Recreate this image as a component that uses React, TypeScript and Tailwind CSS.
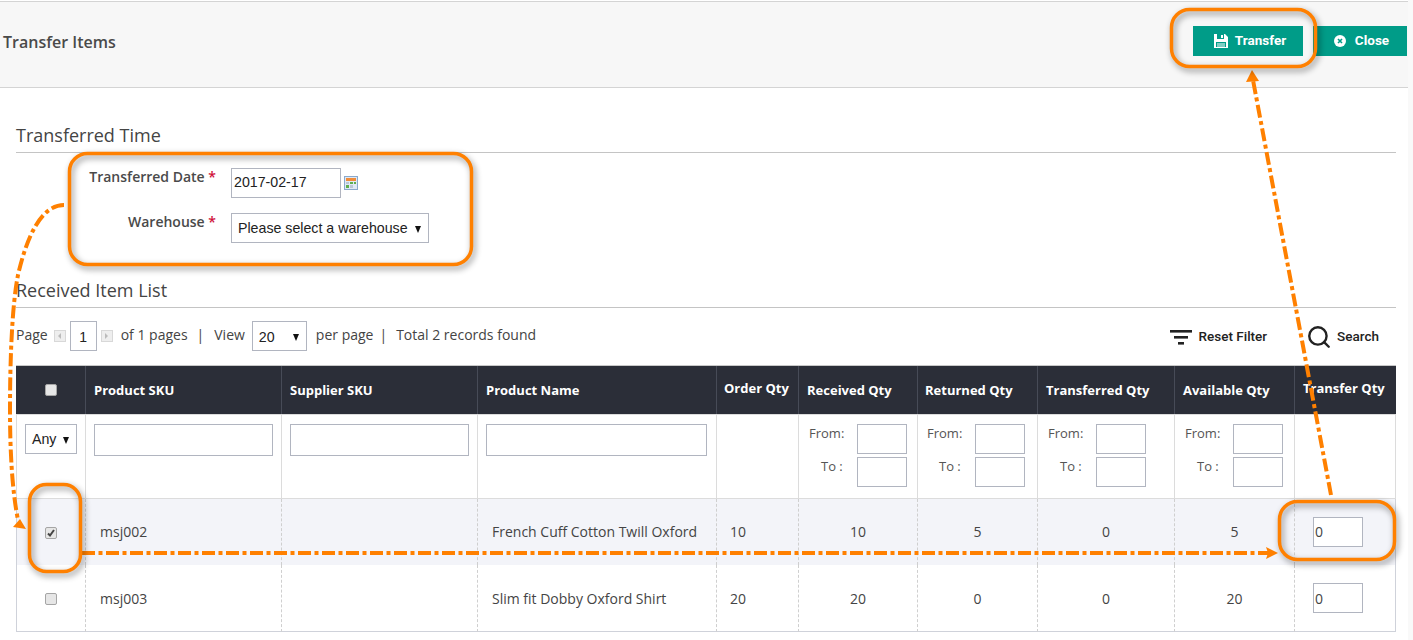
import { Search } from 'lucide-react';

const fieldClass = 'h-[30px] border border-[#b1b5c0] bg-white';

const NativeSelect = ({ value, width, paddingClass }: { value: string; width: string; paddingClass: string }) => (
  <div className={`relative flex items-center ${fieldClass} ${width} ${paddingClass} font-['Liberation_Sans',sans-serif] text-[14.2px] text-[#222]`}>
    {value}
    <span className="absolute right-[7px] top-[12px] h-0 w-0 border-x-[3.5px] border-t-[7px] border-x-transparent border-t-[#111]" />
  </div>
);

const Checkbox = ({ checked = false }: { checked?: boolean }) => (
  <span className="relative mx-auto block h-3 w-3 rounded-[2px] border border-[#a5a5a5] bg-[#e6e6e6]">
    {checked && (
      <svg viewBox="0 0 12 12" className="absolute -left-px -top-px h-3 w-3">
        <path d="M3 6.5 L5 8.5 L9 3" fill="none" stroke="#444" strokeWidth="2" />
      </svg>
    )}
  </span>
);

const PagerArrow = ({ direction }: { direction: 'left' | 'right' }) => (
  <span className="flex h-3 w-3 items-center justify-center border border-[#d8d8d8] bg-[#eee]">
    <span
      className={`h-0 w-0 border-y-[3px] border-y-transparent ${
        direction === 'left' ? 'border-r-[3px] border-r-[#bbb]' : 'border-l-[3px] border-l-[#bbb]'
      }`}
    />
  </span>
);

const RangeFilter = ({ paddingClass }: { paddingClass: string }) => (
  <td className={`border-l border-b border-t border-[#dcdcdc] align-top pt-[9px] ${paddingClass}`}>
    <div className="grid grid-cols-[48px_50px] gap-y-[3px]">
      <span className="leading-[18px] text-[13px] text-[#555]">From:</span>
      <div className={fieldClass} />
      <span className="pl-3 leading-[18px] text-[13px] text-[#555]">To :</span>
      <div className={fieldClass} />
    </div>
  </td>
);

const headers = [
  { label: 'Product SKU', padding: 'pl-2' },
  { label: 'Supplier SKU', padding: 'pl-2' },
  { label: 'Product Name', padding: 'pl-2' },
  { label: 'Order Qty', padding: 'pl-[7px]', raised: true },
  { label: 'Received Qty', padding: 'pl-2' },
  { label: 'Returned Qty', padding: 'pl-[7px]' },
  { label: 'Transferred Qty', padding: 'pl-2' },
  { label: 'Available Qty', padding: 'pl-2' },
  { label: 'Transfer Qty', padding: 'pl-2', raised: true },
];

const rows = [
  { sku: 'msj002', name: 'French Cuff Cotton Twill Oxford', order: '10', received: '10', returned: '5', transferred: '0', available: '5', checked: true },
  { sku: 'msj003', name: 'Slim fit Dobby Oxford Shirt', order: '20', received: '20', returned: '0', transferred: '0', available: '20', checked: false },
];

const dashedCell = 'border-l border-dashed border-[#cfcfcf]';
const lastRowBottom = 'border-b border-b-[#cfd2da] [border-bottom-style:solid]';

const Annotations = () => (
  <svg className="pointer-events-none absolute left-0 top-0" width="1413" height="640" fill="none">
    <g stroke="#ff8000" strokeWidth="4" strokeDasharray="13 3.5 4 3.5">
      <path d="M64 205 C40 205 26 240 18 275 C12 305 10 360 10 410 C10 450 12 490 18 520" />
      <path d="M82 553 H1268" />
      <path d="M1331 495 L1253 80" />
    </g>
    <g fill="#ff8000">
      <path d="M26 529 L13 527 L20 519 Z" />
      <path d="M1278 553 L1266 547 L1268 553 L1266 559 Z" />
      <path d="M1252 70 L1246 82 L1259 81 Z" />
    </g>
    <g stroke="#ff8000" strokeWidth="3.5" className="drop-shadow-[2px_3px_3px_rgba(0,0,0,0.45)]">
      <rect x="1171.5" y="9.5" width="144" height="57" rx="18" />
      <rect x="69.5" y="153.5" width="402" height="111" rx="18" />
      <rect x="29.5" y="484.5" width="51" height="87" rx="17" />
      <rect x="1279.5" y="501.5" width="115" height="58" rx="18" />
    </g>
  </svg>
);

export default function App() {
  return (
    <div className="relative h-[640px] w-[1413px] overflow-hidden bg-white font-['Open_Sans',sans-serif] text-[14px] text-[#444]">
      <div className="absolute right-0 top-0 h-full w-[5px] bg-[#f9f9f9]" />

      <header className="mt-px flex h-[87px] items-center justify-between border-y border-[#d4d4d4] bg-[#f7f7f7] pl-[3px] pr-[6px]">
        <h1 className="pb-[6px] text-[16px] font-semibold text-[#4a4a4a]">Transfer Items</h1>
        <div className="flex gap-[10px] pb-[8px] font-['Roboto',sans-serif] text-[13.5px] font-bold text-white">
          <button className="flex h-[30px] w-[110px] items-center justify-center gap-[6px] bg-[#009c88] pl-[3px]">
            <svg viewBox="0 0 16 16" className="h-4 w-4" fill="#fff">
              <path d="M1 1 H12 L15 4 V15 H1 Z M4 1 V6 H11 V1 Z M8 2 H10 V5 H8 Z M3 9 V14 H13 V9 Z" fillRule="evenodd" />
              <path d="M4 10.5 H12 V11.5 H4 Z M4 12.5 H12 V13.5 H4 Z" />
            </svg>
            Transfer
          </button>
          <button className="flex h-[30px] w-[94px] items-center justify-center gap-[9px] bg-[#009c88] pl-[3px]">
            <svg viewBox="0 0 12 12" className="h-3 w-3">
              <circle cx="6" cy="6" r="6" fill="#fff" />
              <path d="M4 4 L8 8 M8 4 L4 8" stroke="#009c88" strokeWidth="1.6" />
            </svg>
            Close
          </button>
        </div>
      </header>

      <section className="mx-4 mr-[17px]">
        <h2 className="mt-[34px] h-[31px] border-b border-[#c4c4c4] text-[18px] leading-[26px] text-[#444]">Transferred Time</h2>

        <div className="mt-[15px] flex h-[30px] items-start">
          <label className="w-[200px] text-right font-semibold leading-[18px] text-[#4a4a4a]">
            Transferred Date <span className="text-[#d0103a]">*</span>
          </label>
          <div className={`ml-[15px] flex w-[110px] items-center pl-[2px] font-['Liberation_Sans',sans-serif] text-[14.2px] text-[#222] ${fieldClass}`}>
            2017-02-17
          </div>
          <svg viewBox="0 0 14 14" className="ml-[3px] mt-[8px] h-[14px] w-[14px]">
            <rect x="0.5" y="0.5" width="13" height="13" fill="#dfe9f5" stroke="#8aa9cc" />
            <rect x="2" y="2" width="10" height="3" fill="#f08c3a" />
            <rect x="2" y="6" width="3" height="2" fill="#b9c6d6" />
            <rect x="6" y="6" width="3" height="2" fill="#5fae4f" />
            <rect x="10" y="6" width="2" height="2" fill="#5fae4f" />
            <rect x="2" y="9" width="3" height="3" fill="#5fae4f" />
            <rect x="6" y="9" width="3" height="3" fill="#b9c6d6" />
          </svg>
        </div>

        <div className="mt-[15px] flex h-[30px] items-start">
          <label className="w-[200px] text-right font-semibold leading-[18px] text-[#4a4a4a]">
            Warehouse <span className="text-[#d0103a]">*</span>
          </label>
          <div className="ml-[15px]">
            <NativeSelect value="Please select a warehouse" width="w-[198px]" paddingClass="pl-[6px] pt-px" />
          </div>
        </div>

        <h2 className="mt-[34px] h-[31px] border-b border-[#c4c4c4] text-[18px] leading-[26px] text-[#444]">Received Item List</h2>

        <div className="mt-[13px] flex h-[30px] items-center justify-between">
          <div className="flex items-center leading-[28px]">
            <span className="-mt-[2px]">Page</span>
            <span className="ml-[6px]">
              <PagerArrow direction="left" />
            </span>
            <div className={`ml-1 flex w-[27px] items-center justify-center pt-px font-['Liberation_Sans',sans-serif] text-[#222] ${fieldClass}`}>1</div>
            <span className="ml-1">
              <PagerArrow direction="right" />
            </span>
            <span className="-mt-[2px] ml-2">of 1 pages</span>
            <span className="-mt-[2px] ml-[9px]">|</span>
            <span className="-mt-[2px] ml-[10px]">View</span>
            <div className="ml-[7px]">
              <NativeSelect value="20" width="w-[55px]" paddingClass="pl-[6px] pt-px" />
            </div>
            <span className="-mt-[2px] ml-[9px]">per page</span>
            <span className="-mt-[2px] ml-[6px]">|</span>
            <span className="-mt-[2px] ml-[9px]">Total 2 records found</span>
          </div>
          <div className="flex items-center pr-[17px] pt-px font-['Roboto',sans-serif] text-[13.5px] font-medium text-[#222]">
            <svg viewBox="0 0 22 16" className="-ml-px h-4 w-[22px]" fill="#222">
              <rect x="0" y="1" width="22" height="2.6" />
              <rect x="4" y="7" width="14" height="2.6" />
              <rect x="8" y="13" width="6" height="2.6" />
            </svg>
            <span className="ml-[7px]">Reset Filter</span>
            <Search className="ml-[39px] h-[26px] w-[26px] text-[#222]" strokeWidth={2.2} />
            <span className="ml-[5px]">Search</span>
          </div>
        </div>

        <table className="mt-[14px] w-[1380px] table-fixed border-separate border-spacing-0 border-t border-[#c8c8c8]">
          <colgroup>
            <col className="w-[69px]" />
            <col className="w-[196px]" />
            <col className="w-[196px]" />
            <col className="w-[239px]" />
            <col className="w-[82px]" />
            <col className="w-[119px]" />
            <col className="w-[120px]" />
            <col className="w-[137px]" />
            <col className="w-[120px]" />
            <col className="w-[102px]" />
          </colgroup>
          <thead>
            <tr className="h-[48px] bg-[#2b2e38] text-[13px] font-bold text-white">
              <th className="text-center">
                <Checkbox />
              </th>
              {headers.map((header) => (
                <th key={header.label} className={`border-l border-[#474b57] pt-[2px] text-left font-bold ${header.padding}`}>
                  <span className={`block whitespace-nowrap ${header.raised ? '-mt-[4px]' : ''}`}>{header.label}</span>
                </th>
              ))}
            </tr>
          </thead>
          <tbody>
            <tr className="h-[85px]">
              <td className="border-b border-l border-t border-[#dcdcdc] pl-2 align-top pt-[9px]">
                <NativeSelect value="Any" width="w-[52px]" paddingClass="pl-[6px] pt-px" />
              </td>
              {[0, 1, 2].map((column) => (
                <td key={column} className="border-b border-l border-t border-[#dcdcdc] pl-2 align-top pt-[9px]">
                  <div className={`${fieldClass} !h-[32px] ${column === 2 ? 'w-[221px]' : 'w-[179px]'}`} />
                </td>
              ))}
              <td className="border-b border-l border-t border-[#dcdcdc]" />
              <RangeFilter paddingClass="pl-[10px]" />
              <RangeFilter paddingClass="pl-[9px]" />
              <RangeFilter paddingClass="pl-[10px]" />
              <RangeFilter paddingClass="pl-[10px]" />
              <td className="border-b border-l border-r border-t border-[#dcdcdc]" />
            </tr>
            {rows.map((row, rowIndex) => {
              const bottom = rowIndex === 1 ? lastRowBottom : 'pb-px';
              return (
                <tr key={row.sku} className={rowIndex === 0 ? 'h-[66px] bg-[#f3f4f9]' : 'h-[67px] bg-white'}>
                  <td className={`border-l border-[#cfd2da] pt-[2px] ${rowIndex === 1 ? 'border-b' : ''}`}>
                    <Checkbox checked={row.checked} />
                  </td>
                  <td className={`${dashedCell} pl-[14px] ${bottom}`}>{row.sku}</td>
                  <td className={`${dashedCell} ${bottom}`} />
                  <td className={`${dashedCell} pl-[14px] whitespace-nowrap ${bottom}`}>{row.name}</td>
                  <td className={`${dashedCell} pl-[13px] ${bottom}`}>{row.order}</td>
                  {[row.received, row.returned, row.transferred, row.available].map((value, index) => (
                    <td key={index} className={`${dashedCell} text-center ${bottom}`}>
                      {value}
                    </td>
                  ))}
                  <td className={`${dashedCell} border-r border-r-[#cfd2da] [border-right-style:solid] pl-[18px] ${bottom}`}>
                    <div className={`flex w-[50px] items-center pl-px ${fieldClass}`}>0</div>
                  </td>
                </tr>
              );
            })}
          </tbody>
        </table>
      </section>

      <Annotations />
    </div>
  );
}
